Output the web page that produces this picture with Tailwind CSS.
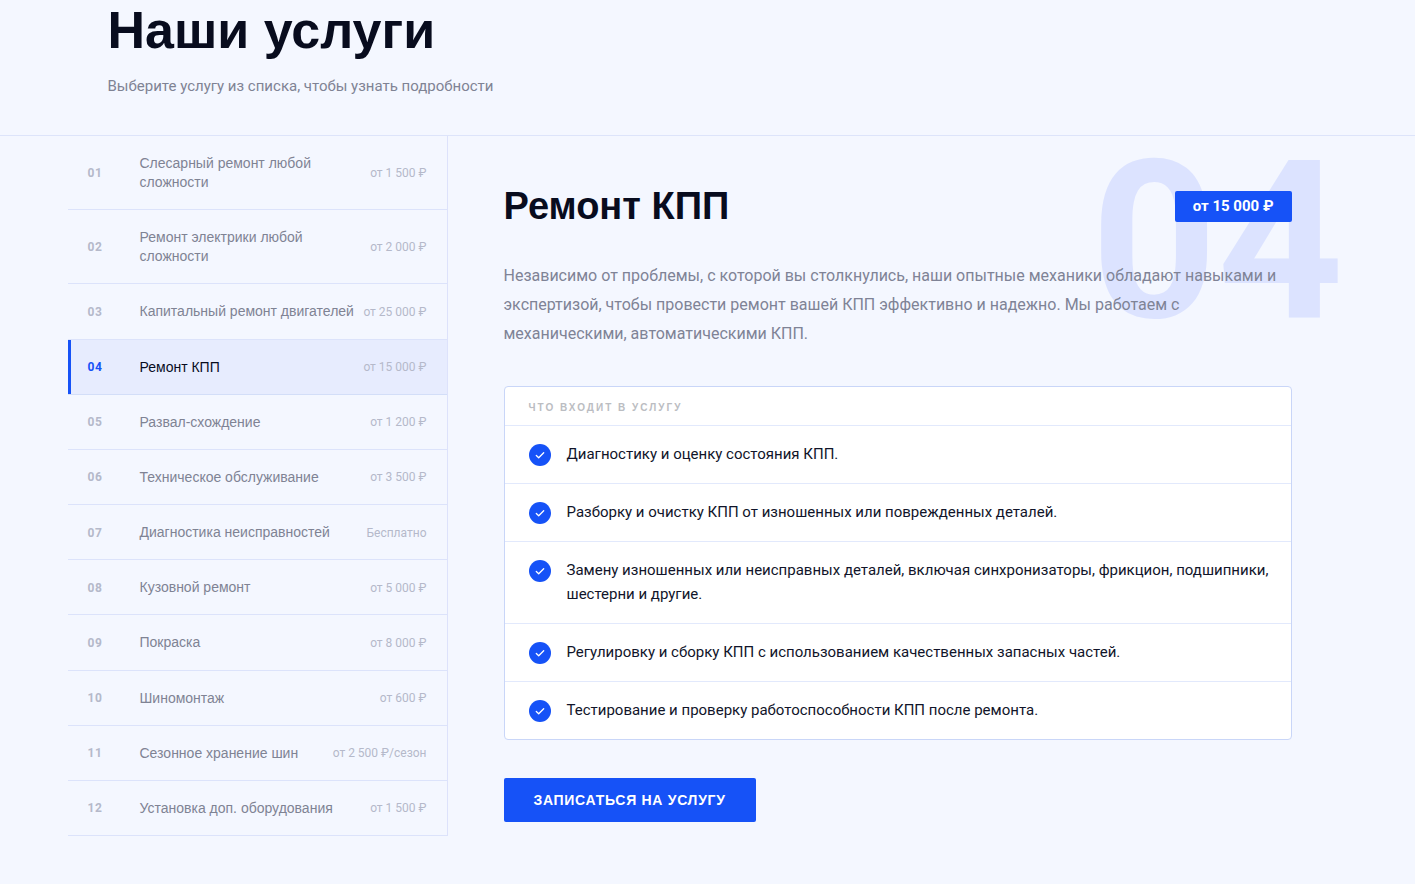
<!DOCTYPE html>
<html lang="ru">
<head>
    <meta charset="UTF-8">
    <meta name="viewport" content="width=device-width, initial-scale=1.0">
    <title>Наши услуги</title>
    <script src="https://cdn.jsdelivr.net/npm/@tailwindcss/browser@4"></script>
</head>
<body class="min-h-screen bg-[#f4f7ff] font-['Roboto',sans-serif] text-[#080c1e]">

    <!-- Section heading -->
    <header class="border-b border-[#dde4fa] pb-[37px]">
        <div class="max-w-[1280px] mx-auto px-10">
            <h1 class="font-['Liberation_Sans',Arial,sans-serif] text-[52px] leading-[60px] font-bold">Наши услуги</h1>
            <p class="mt-3.5 text-[15px] leading-6 text-[#7f8394]">Выберите услугу из списка, чтобы узнать подробности</p>
        </div>
    </header>

    <main class="max-w-[1280px] mx-auto flex items-stretch">

        <!-- Services list -->
        <nav class="w-[380px] shrink-0 border-r border-[#dde2fb] flex flex-col font-['Liberation_Sans',Arial,sans-serif] text-sm text-[#7f8394]" aria-label="Услуги">
            <button type="button" class="grow flex items-center gap-2 border-b border-[#dce3fb] px-5 pt-[18px] pb-[17px] text-left">
                <span class="w-11 shrink-0 font-['Roboto',sans-serif] text-xs font-bold tracking-wider text-[#b5b9ca]">01</span>
                <span class="grow leading-[19px]">Слесарный ремонт любой сложности</span>
                <span class="font-['Roboto',sans-serif] text-xs whitespace-nowrap text-[#b5b9ca]">от 1 500 ₽</span>
            </button>
            <button type="button" class="grow flex items-center gap-2 border-b border-[#dce3fb] px-5 pt-[18px] pb-[17px] text-left">
                <span class="w-11 shrink-0 font-['Roboto',sans-serif] text-xs font-bold tracking-wider text-[#b5b9ca]">02</span>
                <span class="grow leading-[19px]">Ремонт электрики любой сложности</span>
                <span class="font-['Roboto',sans-serif] text-xs whitespace-nowrap text-[#b5b9ca]">от 2 000 ₽</span>
            </button>
            <button type="button" class="grow flex items-center gap-2 border-b border-[#dce3fb] px-5 pt-[18px] pb-[17px] text-left">
                <span class="w-11 shrink-0 font-['Roboto',sans-serif] text-xs font-bold tracking-wider text-[#b5b9ca]">03</span>
                <span class="grow leading-[19px]">Капитальный ремонт двигателей</span>
                <span class="font-['Roboto',sans-serif] text-xs whitespace-nowrap text-[#b5b9ca]">от 25 000 ₽</span>
            </button>
            <button type="button" aria-current="true" class="grow flex items-center gap-2 border-b border-[#d3def8] bg-[#e7ecfe] shadow-[inset_3px_0_0_#1652f7] px-5 pt-[18px] pb-[17px] text-left">
                <span class="w-11 shrink-0 font-['Roboto',sans-serif] text-xs font-bold tracking-wider text-[#1652f7]">04</span>
                <span class="grow leading-[19px] text-[#080c1e]">Ремонт КПП</span>
                <span class="font-['Roboto',sans-serif] text-xs whitespace-nowrap text-[#b5b9ca]">от 15 000 ₽</span>
            </button>
            <button type="button" class="grow flex items-center gap-2 border-b border-[#dce3fb] px-5 pt-[18px] pb-[17px] text-left">
                <span class="w-11 shrink-0 font-['Roboto',sans-serif] text-xs font-bold tracking-wider text-[#b5b9ca]">05</span>
                <span class="grow leading-[19px]">Развал-схождение</span>
                <span class="font-['Roboto',sans-serif] text-xs whitespace-nowrap text-[#b5b9ca]">от 1 200 ₽</span>
            </button>
            <button type="button" class="grow flex items-center gap-2 border-b border-[#dce3fb] px-5 pt-[18px] pb-[17px] text-left">
                <span class="w-11 shrink-0 font-['Roboto',sans-serif] text-xs font-bold tracking-wider text-[#b5b9ca]">06</span>
                <span class="grow leading-[19px]">Техническое обслуживание</span>
                <span class="font-['Roboto',sans-serif] text-xs whitespace-nowrap text-[#b5b9ca]">от 3 500 ₽</span>
            </button>
            <button type="button" class="grow flex items-center gap-2 border-b border-[#dce3fb] px-5 pt-[18px] pb-[17px] text-left">
                <span class="w-11 shrink-0 font-['Roboto',sans-serif] text-xs font-bold tracking-wider text-[#b5b9ca]">07</span>
                <span class="grow leading-[19px]">Диагностика неисправностей</span>
                <span class="font-['Roboto',sans-serif] text-xs whitespace-nowrap text-[#b5b9ca]">Бесплатно</span>
            </button>
            <button type="button" class="grow flex items-center gap-2 border-b border-[#dce3fb] px-5 pt-[18px] pb-[17px] text-left">
                <span class="w-11 shrink-0 font-['Roboto',sans-serif] text-xs font-bold tracking-wider text-[#b5b9ca]">08</span>
                <span class="grow leading-[19px]">Кузовной ремонт</span>
                <span class="font-['Roboto',sans-serif] text-xs whitespace-nowrap text-[#b5b9ca]">от 5 000 ₽</span>
            </button>
            <button type="button" class="grow flex items-center gap-2 border-b border-[#dce3fb] px-5 pt-[18px] pb-[17px] text-left">
                <span class="w-11 shrink-0 font-['Roboto',sans-serif] text-xs font-bold tracking-wider text-[#b5b9ca]">09</span>
                <span class="grow leading-[19px]">Покраска</span>
                <span class="font-['Roboto',sans-serif] text-xs whitespace-nowrap text-[#b5b9ca]">от 8 000 ₽</span>
            </button>
            <button type="button" class="grow flex items-center gap-2 border-b border-[#dce3fb] px-5 pt-[18px] pb-[17px] text-left">
                <span class="w-11 shrink-0 font-['Roboto',sans-serif] text-xs font-bold tracking-wider text-[#b5b9ca]">10</span>
                <span class="grow leading-[19px]">Шиномонтаж</span>
                <span class="font-['Roboto',sans-serif] text-xs whitespace-nowrap text-[#b5b9ca]">от 600 ₽</span>
            </button>
            <button type="button" class="grow flex items-center gap-2 border-b border-[#dce3fb] px-5 pt-[18px] pb-[17px] text-left">
                <span class="w-11 shrink-0 font-['Roboto',sans-serif] text-xs font-bold tracking-wider text-[#b5b9ca]">11</span>
                <span class="grow leading-[19px]">Сезонное хранение шин</span>
                <span class="font-['Roboto',sans-serif] text-xs whitespace-nowrap text-[#b5b9ca]">от 2 500 ₽/сезон</span>
            </button>
            <button type="button" class="grow flex items-center gap-2 border-b border-[#dce3fb] px-5 pt-[18px] pb-[17px] text-left">
                <span class="w-11 shrink-0 font-['Roboto',sans-serif] text-xs font-bold tracking-wider text-[#b5b9ca]">12</span>
                <span class="grow leading-[19px]">Установка доп. оборудования</span>
                <span class="font-['Roboto',sans-serif] text-xs whitespace-nowrap text-[#b5b9ca]">от 1 500 ₽</span>
            </button>
        </nav>

        <!-- Selected service -->
        <section class="relative grow min-w-0 px-14 pt-12 pb-3.5">
            <span class="absolute -top-1 right-1 z-0 text-[220px] leading-none font-bold text-[#dce3ff] select-none" aria-hidden="true">04</span>

            <div class="relative z-10">
                <div class="flex items-center justify-between gap-6">
                    <h2 class="font-['Liberation_Sans',Arial,sans-serif] text-[38px] leading-[44px] font-bold">Ремонт КПП</h2>
                    <span class="rounded-xs bg-[#1652f7] px-[18px] py-1.5 text-[15px] leading-[19px] font-bold whitespace-nowrap text-white">от 15 000 ₽</span>
                </div>

                <p class="mt-[33px] text-base leading-[29px] text-[#7f8396]">Независимо от проблемы, с которой вы столкнулись, наши опытные механики обладают навыками и экспертизой, чтобы провести ремонт вашей КПП эффективно и надежно. Мы работаем с механическими, автоматическими КПП.</p>

                <div class="mt-[38px] rounded border border-[#c9d6f8] bg-white">
                    <h3 class="border-b border-[#e2e9fc] px-6 pt-3.5 pb-2.5 font-['Liberation_Sans',Arial,sans-serif] text-[10px] leading-[14px] font-bold tracking-[2px] uppercase text-[#bbbdc2]">Что входит в услугу</h3>
                    <ul class="text-[15px] leading-6 text-[#11152a] divide-y divide-[#e2e9fc]">
                        <li class="flex items-start gap-4 pl-6 pr-5 pt-4 pb-[17px]">
                            <svg class="mt-0.5 size-[22px] shrink-0" viewBox="0 0 22 22" fill="none"><circle cx="11" cy="11" r="11" fill="#1652f7"/><path d="M7.3 11.5l2.4 2.3 5-5" stroke="#fff" stroke-width="1.3" stroke-linecap="round" stroke-linejoin="round"/></svg>
                            <span>Диагностику и оценку состояния КПП.</span>
                        </li>
                        <li class="flex items-start gap-4 pl-6 pr-5 pt-4 pb-[17px]">
                            <svg class="mt-0.5 size-[22px] shrink-0" viewBox="0 0 22 22" fill="none"><circle cx="11" cy="11" r="11" fill="#1652f7"/><path d="M7.3 11.5l2.4 2.3 5-5" stroke="#fff" stroke-width="1.3" stroke-linecap="round" stroke-linejoin="round"/></svg>
                            <span>Разборку и очистку КПП от изношенных или поврежденных деталей.</span>
                        </li>
                        <li class="flex items-start gap-4 pl-6 pr-5 pt-4 pb-[17px]">
                            <svg class="mt-0.5 size-[22px] shrink-0" viewBox="0 0 22 22" fill="none"><circle cx="11" cy="11" r="11" fill="#1652f7"/><path d="M7.3 11.5l2.4 2.3 5-5" stroke="#fff" stroke-width="1.3" stroke-linecap="round" stroke-linejoin="round"/></svg>
                            <span>Замену изношенных или неисправных деталей, включая синхронизаторы, фрикцион, подшипники, шестерни и другие.</span>
                        </li>
                        <li class="flex items-start gap-4 pl-6 pr-5 pt-4 pb-[17px]">
                            <svg class="mt-0.5 size-[22px] shrink-0" viewBox="0 0 22 22" fill="none"><circle cx="11" cy="11" r="11" fill="#1652f7"/><path d="M7.3 11.5l2.4 2.3 5-5" stroke="#fff" stroke-width="1.3" stroke-linecap="round" stroke-linejoin="round"/></svg>
                            <span>Регулировку и сборку КПП с использованием качественных запасных частей.</span>
                        </li>
                        <li class="flex items-start gap-4 pl-6 pr-5 pt-4 pb-[17px]">
                            <svg class="mt-0.5 size-[22px] shrink-0" viewBox="0 0 22 22" fill="none"><circle cx="11" cy="11" r="11" fill="#1652f7"/><path d="M7.3 11.5l2.4 2.3 5-5" stroke="#fff" stroke-width="1.3" stroke-linecap="round" stroke-linejoin="round"/></svg>
                            <span>Тестирование и проверку работоспособности КПП после ремонта.</span>
                        </li>
                    </ul>
                </div>

                <button type="button" class="mt-[38px] block rounded-xs bg-[#1652f7] px-[30px] py-3 font-['Liberation_Sans',Arial,sans-serif] text-sm leading-5 font-bold tracking-wider uppercase text-white">Записаться на услугу</button>
            </div>
        </section>
    </main>
</body>
</html>
